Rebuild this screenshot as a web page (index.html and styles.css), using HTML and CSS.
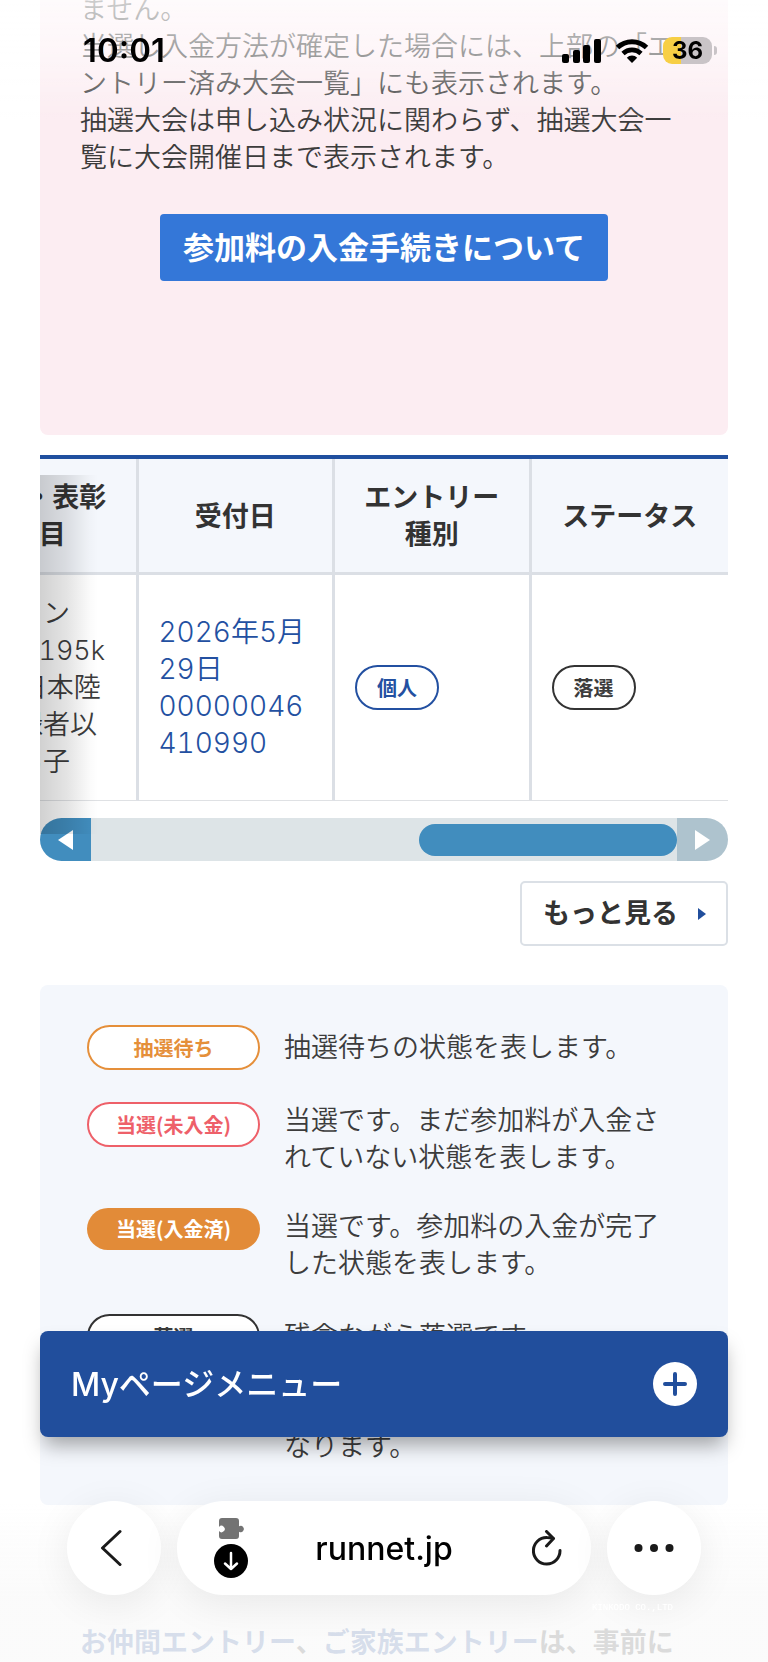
FILE: index.html
```html
<!DOCTYPE html>
<html lang="ja">
<head>
  <meta charset="UTF-8">
  <meta name="viewport" content="width=device-width, initial-scale=1.0">
  <title>Myページ - runnet.jp</title>
  <link rel="stylesheet" href="styles.css">
</head>
<body>
  <!-- ステータスバー -->
  <div class="status-bar">
    <span class="status-time">10:01</span>
    <div class="status-icons">
      <svg width="39" height="24" viewBox="0 0 39 24">
        <rect x="0" y="15" width="7" height="9" rx="2"/>
        <rect x="11" y="11" width="7" height="13" rx="2"/>
        <rect x="21" y="6" width="7" height="18" rx="2"/>
        <rect x="32" y="0" width="7" height="24" rx="2"/>
      </svg>
      <svg width="34" height="24" viewBox="0 0 34 24">
        <path d="M2.5 8.5 A21 21 0 0 1 31.5 8.5" fill="none" stroke="#000" stroke-width="5"/>
        <path d="M8 14.5 A13 13 0 0 1 26 14.5" fill="none" stroke="#000" stroke-width="4.6"/>
        <path d="M17 24 L11.8 18.7 A7.5 7.5 0 0 1 22.2 18.7 Z"/>
      </svg>
      <span class="battery">36</span>
    </div>
  </div>

  <main class="page">
    <section class="notice">
      <p>ません。<br>
      当選し入金方法が確定した場合には、上部の「エントリー済み大会一覧」にも表示されます。<br>
      抽選大会は申し込み状況に関わらず、抽選大会一覧に大会開催日まで表示されます。</p>
      <a class="notice-btn" href="#">参加料の入金手続きについて</a>
    </section>

    <!-- 抽選大会一覧 -->
    <div class="scroll-area">
      <div class="table-wrap">
        <table class="entry-table">
          <thead>
            <tr>
              <th>種目・表彰<br>項目</th>
              <th>受付日</th>
              <th>エントリー<br>種別</th>
              <th>ステータス</th>
            </tr>
          </thead>
          <tbody>
            <tr>
              <td>マラソン<br>（ 42.195k<br>m） 日本陸<br>連登録者以<br>外の男子</td>
              <td class="date">2026年5月<br>29日<br>00000046<br>410990</td>
              <td><span class="badge badge-blue">個人</span></td>
              <td><span class="badge">落選</span></td>
            </tr>
          </tbody>
        </table>
      </div>
      <div class="scroll-bar">
        <button type="button" class="scroll-btn" aria-label="左へ">
          <svg width="15" height="20" viewBox="0 0 15 20"><path d="M15 0 V20 L0 10 Z" fill="#fff"/></svg>
        </button>
        <div class="scroll-track"><div class="scroll-thumb"></div></div>
        <button type="button" class="scroll-btn disabled" aria-label="右へ">
          <svg width="15" height="20" viewBox="0 0 15 20"><path d="M0 0 V20 L15 10 Z" fill="#fff"/></svg>
        </button>
      </div>
    </div>

    <a class="more-btn" href="#">もっと見る
      <svg width="8" height="12" viewBox="0 0 8 12"><path d="M0 0 V12 L8 6 Z" fill="#214e9c"/></svg>
    </a>

    <!-- ステータスの説明 -->
    <dl class="legend">
      <dt class="badge badge-orange">抽選待ち</dt>
      <dd>抽選待ちの状態を表します。</dd>
      <dt class="badge badge-red">当選(未入金)</dt>
      <dd>当選です。まだ参加料が入金されていない状態を表します。</dd>
      <dt class="badge badge-paid">当選(入金済)</dt>
      <dd>当選です。参加料の入金が完了した状態を表します。</dd>
      <dt class="badge">落選</dt>
      <dd>残念ながら落選です。</dd>
      <dt class="badge">取消</dt>
      <dd>エントリーがキャンセルと<br>なります。</dd>
    </dl>

    <p class="group-note"><a href="#">お仲間エントリー</a>、<a href="#">ご家族エントリー</a>は、事前に</p>
  </main>

  <div class="bottom-fade"></div>

  <button type="button" class="my-menu">
    <span>Myページメニュー</span>
    <svg width="44" height="44" viewBox="0 0 44 44">
      <circle cx="22" cy="22" r="22" fill="#fff"/>
      <path d="M22 12 V32 M12 22 H32" stroke="#214e9c" stroke-width="4" stroke-linecap="round"/>
    </svg>
  </button>

  <!-- ブラウザのツールバー -->
  <div class="browser-bar">
    <button type="button" class="round-btn back-btn" aria-label="戻る">
      <svg width="22" height="38" viewBox="0 0 22 38"><path d="M20 2.5 L2.5 19 L20 35.5" fill="none" stroke="#1a1a1a" stroke-width="3" stroke-linecap="round" stroke-linejoin="round"/></svg>
    </button>
    <div class="address">
      <svg class="site-icons" width="34" height="60" viewBox="0 0 34 60">
        <path d="M8 0 H22 Q25 0 25 3 V8.3 A3.2 3.2 0 1 1 25 13.7 V18 Q25 21 22 21 H8 Q5 21 5 18 V13 A3.2 3.2 0 1 0 5 9 V3 Q5 0 8 0 Z" fill="#737373"/>
        <circle cx="17" cy="43" r="17"/>
        <path d="M17 35 V51 M11 45.5 L17 51 L23 45.5" fill="none" stroke="#fff" stroke-width="2.5" stroke-linecap="round" stroke-linejoin="round"/>
      </svg>
      <span class="domain">runnet.jp</span>
      <button type="button" class="reload-btn" aria-label="再読み込み">
        <svg width="30" height="36" viewBox="0 0 30 36" fill="none" stroke="#1a1a1a" stroke-width="3" stroke-linecap="round" stroke-linejoin="round">
          <path d="M28 20.5 A13.3 13.3 0 1 1 15 7.5 Q18 7.5 21 8.5"/>
          <path d="M14.5 1.5 L21.5 8.5 L14.5 16"/>
        </svg>
      </button>
    </div>
    <button type="button" class="round-btn" aria-label="メニュー">
      <svg width="40" height="8" viewBox="0 0 40 8" fill="#1a1a1a"><circle cx="4.5" cy="4" r="4"/><circle cx="20" cy="4" r="4"/><circle cx="35.5" cy="4" r="4"/></svg>
    </button>
    <span class="copyright">KINKODO CO.,LTD</span>
  </div>
</body>
</html>
```
FILE: styles.css
```css
* {
  box-sizing: border-box;
}

body {
  margin: 0;
  overflow: hidden;
  background-color: #fff;
  color: #3c3c3c;
  font-family: "Inter", "Noto Sans CJK JP", sans-serif;
  font-size: 27px;
  font-weight: 350;
  line-height: 37px;
}

p {
  margin: 0;
}

a {
  text-decoration: none;
}

button {
  padding: 0;
  border: none;
  font: inherit;
  cursor: pointer;
}

svg {
  display: block;
  flex-shrink: 0;
}

/* status bar */
.status-bar {
  position: fixed;
  top: 0;
  left: 0;
  right: 0;
  z-index: 2;
  display: flex;
  justify-content: space-between;
  align-items: flex-start;
  height: 120px;
  padding: 32px 56px 0 83px;
  background: linear-gradient(rgba(255, 255, 255, 0.75), rgba(255, 255, 255, 0.5) 45%, rgba(255, 255, 255, 0));
  color: #000;
}

.status-time {
  font-size: 33px;
  font-weight: 600;
}

.status-icons {
  display: flex;
  align-items: center;
  gap: 14px;
  height: 37px;
}

.battery {
  position: relative;
  width: 49px;
  height: 27px;
  border-radius: 9px;
  background: linear-gradient(90deg, #f7cf45 36%, #c9c4c7 36%);
  font-size: 24px;
  font-weight: 700;
  line-height: 27px;
  text-align: center;
}

.battery::after {
  content: "";
  position: absolute;
  top: 9px;
  right: -5px;
  width: 3px;
  height: 9px;
  border-radius: 0 3px 3px 0;
  background-color: #c9c4c7;
}

/* page */
.page {
  padding: 0 40px;
}

.notice {
  height: 444px;
  margin-top: -9px;
  padding: 0 40px;
  border-radius: 0 0 8px 8px;
  background-color: #fcedf2;
}

.notice-btn {
  display: block;
  width: 448px;
  margin: 38px auto 0;
  border-radius: 4px;
  background-color: #3477d8;
  color: #fff;
  font-size: 31px;
  font-weight: 600;
  line-height: 67px;
  text-align: center;
}

/* table */
.scroll-area {
  position: relative;
  margin-top: 20px;
}

.scroll-area::before {
  content: "";
  position: absolute;
  top: 20px;
  left: 0;
  z-index: 1;
  width: 58px;
  height: 359px;
  background: linear-gradient(90deg, rgba(0, 0, 0, 0.18), rgba(0, 0, 0, 0.11) 45%, rgba(0, 0, 0, 0.02) 85%, rgba(0, 0, 0, 0));
}

.table-wrap {
  display: flex;
  justify-content: flex-end;
  overflow: hidden;
}

.entry-table {
  flex-shrink: 0;
  width: 786px;
  table-layout: fixed;
  border-spacing: 0;
  border-top: 4px solid #204f9f;
}

.entry-table th,
.entry-table td {
  padding: 20px;
  border-right: 3px solid #dbdfe5;
  border-bottom: 1px solid #dfe1e4;
}

.entry-table th:last-child,
.entry-table td:last-child {
  border-right: none;
}

.entry-table th {
  padding: 20px 20px 19px;
  border-bottom: 3px solid #dbdfe5;
  background-color: #f4f7fc;
  color: #333;
  font-weight: 600;
}

.entry-table td {
  font-variant-numeric: tabular-nums;
  white-space: nowrap;
}

.entry-table .date {
  color: #2350a1;
  font-size: 28px;
}

.badge {
  display: inline-block;
  height: 45px;
  padding: 0 20px;
  border: 2px solid #333;
  border-radius: 23px;
  background-color: #fff;
  font-family: "Noto Sans CJK JP", sans-serif;
  font-size: 20px;
  font-weight: 600;
  line-height: 41px;
  text-align: center;
}

.badge-blue {
  border-color: #2350a1;
  color: #2350a1;
}

.badge-orange {
  border-color: #e58f3a;
  color: #e58f3a;
}

.badge-red {
  border-color: #ee6069;
  color: #ee6069;
}

.badge-paid {
  height: 42px;
  border: none;
  background-color: #e28b38;
  color: #fff;
}

.scroll-bar {
  display: flex;
  height: 43px;
  margin-top: 17px;
  border-radius: 22px;
  overflow: hidden;
}

.scroll-btn {
  display: flex;
  justify-content: center;
  align-items: center;
  width: 51px;
  background-color: #418dbe;
}

.scroll-btn.disabled {
  background-color: #aec3ce;
}

.scroll-track {
  flex: 1;
  padding: 6px 0 5px;
  background-color: #dde4e7;
}

.scroll-thumb {
  width: 44%;
  height: 32px;
  margin-left: auto;
  border-radius: 16px;
  background-color: #418dbe;
}

.more-btn {
  display: flex;
  justify-content: space-between;
  align-items: center;
  width: 208px;
  height: 65px;
  margin: 20px 0 0 auto;
  padding: 0 20px 0 21px;
  border: 2px solid #dbe0e6;
  border-radius: 5px;
  color: #333;
  font-weight: 600;
}

/* legend */
.legend {
  display: grid;
  grid-template-columns: 173px 1fr;
  align-items: start;
  gap: 32px 24px;
  margin: 39px 0 0;
  padding: 40px 60px 40px 47px;
  border-radius: 8px;
  background-color: #f4f7fc;
}

.legend dd {
  display: flex;
  align-items: center;
  min-height: 45px;
  margin: 0;
}

.group-note {
  margin-top: 119px;
  padding: 0 40px;
  font-weight: 600;
  white-space: nowrap;
}

.group-note a {
  color: #214e9c;
}

.bottom-fade {
  position: fixed;
  left: 0;
  right: 0;
  bottom: 0;
  height: 160px;
  background: linear-gradient(rgba(250, 250, 250, 0), rgba(250, 250, 250, 0.84) 60%);
}

/* fixed menu */
.my-menu {
  position: fixed;
  left: 40px;
  right: 40px;
  bottom: 225px;
  display: flex;
  justify-content: space-between;
  align-items: center;
  height: 106px;
  padding: 0 31px;
  border-radius: 8px;
  background-color: #214e9c;
  box-shadow: 0 12px 20px -4px rgba(0, 0, 0, 0.35);
  color: #fff;
  font-size: 32px;
  font-weight: 500;
}

/* browser toolbar */
.browser-bar {
  position: fixed;
  left: 0;
  right: 0;
  bottom: 67px;
  display: flex;
  gap: 16px;
  padding: 0 67px;
}

.round-btn,
.address {
  align-items: center;
  height: 94px;
  border-radius: 47px;
  background-color: #fff;
  box-shadow: 0 8px 40px rgba(0, 0, 0, 0.08);
}

.round-btn {
  display: flex;
  justify-content: center;
  width: 94px;
}

.back-btn {
  padding-right: 6px;
}

.address {
  flex: 1;
  display: grid;
  grid-template-columns: 1fr auto 1fr;
  padding: 0 29px;
}

.site-icons {
  margin-left: 8px;
}

.domain {
  color: #000;
  font-size: 32px;
  font-weight: 500;
}

.reload-btn {
  justify-self: end;
  background: none;
}

.copyright {
  position: absolute;
  top: 101px;
  right: 95px;
  color: #fff;
  font-family: "Liberation Mono", monospace;
  font-size: 9px;
  line-height: 12px;
}
```
